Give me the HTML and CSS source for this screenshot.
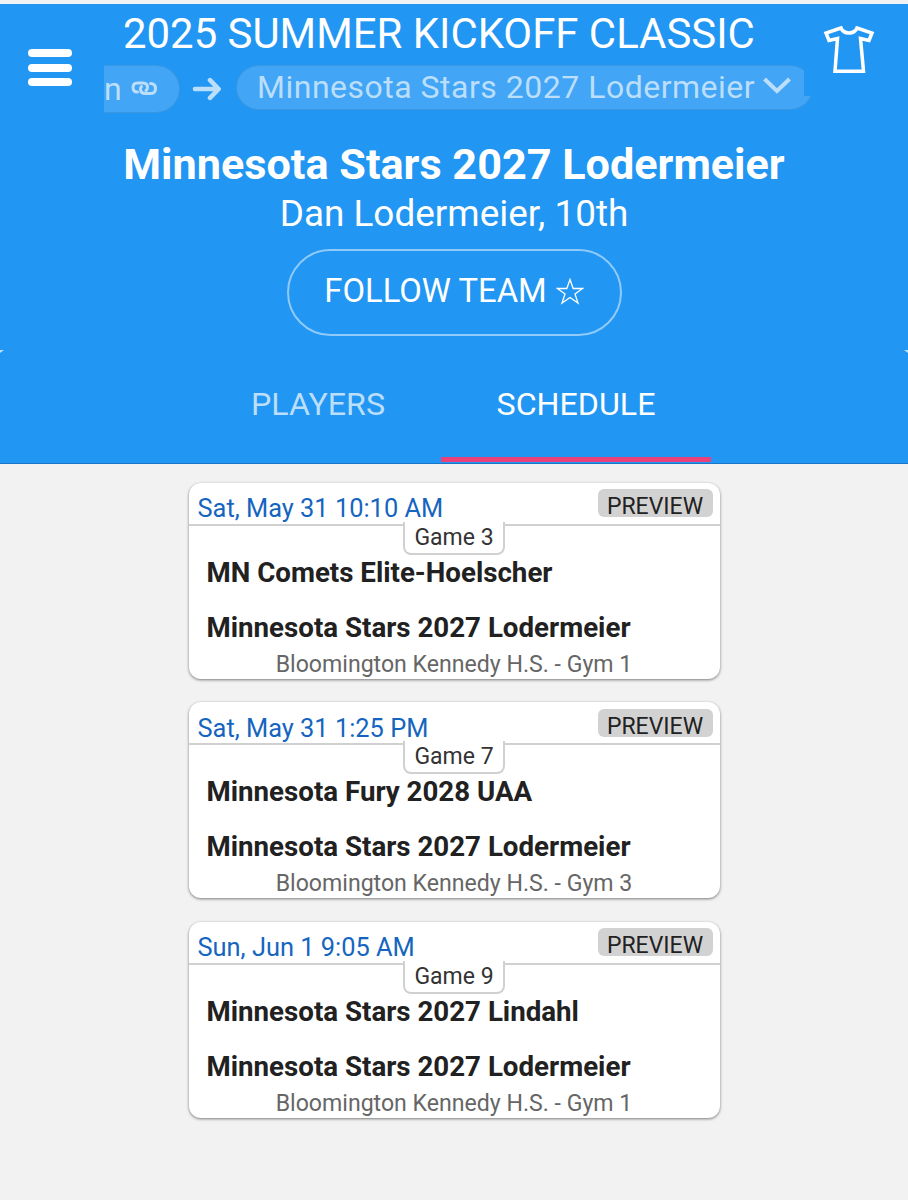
FILE: index.html
```
<!DOCTYPE html>
<html lang="en">
<head>
  <meta charset="UTF-8">
  <meta name="viewport" content="width=device-width, initial-scale=1.0">
  <title>Minnesota Stars 2027 Lodermeier</title>
  <link rel="stylesheet" href="styles.css">
</head>
<body>
  <header class="header">
    <div class="topbar">
      <button class="icon-btn menu-btn" aria-label="Menu">
        <span class="bar"></span>
        <span class="bar"></span>
        <span class="bar"></span>
      </button>
      <div class="topbar-main">
        <div class="event-title"><span>2025 SUMMER KICKOFF CLASSIC</span></div>
        <nav class="crumbs">
          <a class="crumb crumb-prev"><span>n</span>
            <svg class="link-icon" width="27" height="15" viewBox="0 0 27 15" fill="none" stroke="currentColor" stroke-width="3" stroke-linecap="round" stroke-linejoin="round">
              <path d="M6.500 11C3.500 11 2 9.500 2 6.500C2 3.500 3.500 2 6.500 2H12C15 2 16.500 3.500 16.500 6.500C16.500 8 16 8.800 15 9.500"/>
              <path d="M19.500 2.500C23 2.500 24.500 4.500 24.500 7.500C24.500 11 23 12.500 20 12.500H14.500C11 12.500 9.500 11 9.500 8C9.500 6.800 9.800 6 10.500 5.500"/>
            </svg>
          </a>
          <svg class="arrow-icon" width="30" height="24" viewBox="0 0 30 24" fill="none" stroke="currentColor" stroke-width="4.600" stroke-linecap="round" stroke-linejoin="round">
            <path d="M3 12H26M18 3.200L26.700 12L18 20.800"/>
          </svg>
          <a class="crumb crumb-current"><span>Minnesota Stars 2027 Lodermeier</span>
            <svg class="chevron-icon" width="28" height="18" viewBox="0 0 28 18" fill="none" stroke="currentColor" stroke-width="4">
              <path d="M1.500 2L14 14L26.500 2"/>
            </svg>
          </a>
        </nav>
      </div>
      <button class="icon-btn shirt-btn" aria-label="Team">
        <svg width="52" height="50" viewBox="0 0 52 50" fill="none" stroke="currentColor" stroke-width="3.500">
          <path d="M18 4L3 9L6 16.500L14.500 14.500L12 47.200H40.500L37.500 14.500L46 16.500L49 9L34 4C31.500 10.500 20.500 10.500 18 4Z"/>
        </svg>
      </button>
    </div>
    <h1 class="team-name"><span>Minnesota Stars 2027 Lodermeier</span></h1>
    <div class="team-coach"><span>Dan Lodermeier, 10th</span></div>
    <button class="follow-btn"><span>FOLLOW TEAM</span>
      <svg width="28" height="27" viewBox="0 0 28 27" fill="none" stroke="currentColor" stroke-width="1.300">
        <path d="M14 1.500L17.200 10.500H26.500L19 16L22 25L14 19.500L6 25L9 16L1.500 10.500H10.800Z"/>
      </svg>
    </button>
    <nav class="tabs">
      <a class="tab"><span>PLAYERS</span></a>
      <a class="tab active"><span>SCHEDULE</span></a>
    </nav>
  </header>

  <main class="games">
    <div class="game">
      <div class="game-head">
        <span class="game-date">Sat, May 31 10:10 AM</span>
        <span class="preview">PREVIEW</span>
      </div>
      <div class="game-number">Game 3</div>
      <div class="game-team"><span>MN Comets Elite-Hoelscher</span></div>
      <div class="game-team"><span>Minnesota Stars 2027 Lodermeier</span></div>
      <div class="game-venue"><span>Bloomington Kennedy H.S. - Gym 1</span></div>
    </div>
    <div class="game">
      <div class="game-head">
        <span class="game-date">Sat, May 31 1:25 PM</span>
        <span class="preview">PREVIEW</span>
      </div>
      <div class="game-number">Game 7</div>
      <div class="game-team"><span>Minnesota Fury 2028 UAA</span></div>
      <div class="game-team"><span>Minnesota Stars 2027 Lodermeier</span></div>
      <div class="game-venue"><span>Bloomington Kennedy H.S. - Gym 3</span></div>
    </div>
    <div class="game">
      <div class="game-head">
        <span class="game-date">Sun, Jun 1 9:05 AM</span>
        <span class="preview">PREVIEW</span>
      </div>
      <div class="game-number">Game 9</div>
      <div class="game-team"><span>Minnesota Stars 2027 Lindahl</span></div>
      <div class="game-team"><span>Minnesota Stars 2027 Lodermeier</span></div>
      <div class="game-venue"><span>Bloomington Kennedy H.S. - Gym 1</span></div>
    </div>
  </main>
</body>
</html>
```
FILE: styles.css
```
* {
  margin: 0;
  padding: 0;
  box-sizing: border-box;
}
body {
  background: #f2f2f2;
  color: #212121;
  font-family: Roboto, "Liberation Sans", sans-serif;
  min-height: 100vh;
  border-top: 4px solid #f2f2f2;
  white-space: nowrap;
}
button {
  font: inherit;
  color: inherit;
  background: none;
  border: none;
}
svg {
  display: block;
  flex: none;
}
.header {
  background: #2196f3;
  color: #fff;
  height: 459.500px;
  border-bottom: 1px solid #1976c8;
  display: flex;
  flex-direction: column;
  align-items: center;
}
.topbar {
  width: 100%;
  height: 136px;
  display: grid;
  grid-template-columns: 104px 700px 104px;
}
.icon-btn {
  display: flex;
}
.menu-btn {
  flex-direction: column;
  gap: 6.500px;
  padding: 45px 0 0 28px;
}
.bar {
  width: 44px;
  height: 8px;
  border-radius: 4px;
  background: #fff;
}
.shirt-btn {
  padding: 20px 0 0 19px;
}
.event-title {
  height: 61px;
  padding-left: 19px;
  font-size: 41.900px;
  line-height: 59px;
}
.crumbs {
  width: 709px;
  height: 50px;
  display: flex;
  align-items: flex-start;
  color: #bbdefb;
  font-size: 32px;
  /* the current crumb runs a little past the scroll area */
  clip-path: polygon(0 0, 700px 0, 700px 31px, 709px 31px, 709px 50px, 0 50px);
}
.crumb {
  display: flex;
  background: #42a5f5;
  box-shadow: 0 0 0 1px #3a98e2;
  letter-spacing: 0.500px;
}
.crumb-prev {
  width: 75px;
  height: 46px;
  margin-top: 1px;
  border-radius: 0 23px 23px 0;
  line-height: 47px;
}
.link-icon {
  margin: 15px 0 0 9px;
}
.arrow-icon {
  margin: 12px 15px 0 13px;
}
.crumb-current {
  width: 575px;
  height: 43px;
  margin-top: 1px;
  padding-left: 20px;
  border-radius: 22px;
  line-height: 42px;
}
.chevron-icon {
  margin: 11px 0 0 8px;
}
.team-name {
  height: 49px;
  font-size: 43.200px;
  line-height: 49px;
}
.team-coach {
  height: 60px;
  font-size: 36.900px;
  line-height: 49px;
}
.follow-btn {
  width: 335px;
  height: 87px;
  padding-bottom: 3px;
  border: 2px solid #90caf9;
  border-radius: 44px;
  display: flex;
  justify-content: center;
  align-items: center;
  gap: 9px;
  font-size: 32.800px;
}
.tabs {
  position: relative;
  flex: 1;
  width: 100%;
  padding: 15px 0 0 195px;
  display: flex;
}
/* rounded corners of the tab bar */
.tabs::before,
.tabs::after {
  content: '';
  position: absolute;
  top: 14px;
  width: 4px;
  height: 3px;
  background: #bbdefb;
}
.tabs::before {
  left: 0;
  clip-path: polygon(0 0, 100% 0, 0 100%);
}
.tabs::after {
  right: 0;
  clip-path: polygon(0 0, 100% 0, 100% 100%);
}
.tab {
  height: 111px;
  color: #bbdefb;
  font-size: 32.200px;
  line-height: 107px;
  text-align: center;
}
.tab:first-child {
  width: 246px;
}
.tab.active {
  width: 270px;
  color: #fff;
  border-bottom: 5px solid #ec407a;
}
.games {
  display: flex;
  flex-direction: column;
  align-items: center;
  gap: 23.500px;
  padding-top: 19px;
}
.game {
  width: 531px;
  height: 196px;
  background: #fff;
  border-radius: 12px;
  box-shadow: 0 1px 3px rgba(0, 0, 0, 0.5);
  display: flex;
  flex-direction: column;
}
.game > div {
  flex: none;
}
.game-head {
  height: 43px;
  padding: 6.500px 7px 0 9px;
  border-bottom: 2px solid #d0d0d0;
  display: flex;
  justify-content: space-between;
  align-items: flex-start;
}
.game-date {
  color: #1565c0;
  font-size: 25.400px;
  line-height: 39px;
}
.preview {
  width: 115px;
  height: 28px;
  border-radius: 6px;
  background: #d2d2d2;
  font-size: 23px;
  line-height: 35px;
  text-align: center;
}
.game-number {
  align-self: center;
  width: 102px;
  height: 33px;
  margin-top: -4px;
  border: 2px solid #d0d0d0;
  border-top: none;
  border-radius: 0 0 8px 8px;
  background: #fff;
  color: #333;
  font-size: 23px;
  line-height: 31px;
  text-align: center;
}
.game-team {
  height: 55px;
  padding-left: 18px;
  font-size: 27.700px;
  font-weight: 700;
  line-height: 36px;
}
.game-venue {
  margin-top: -19px;
  color: #666;
  font-size: 23.100px;
  line-height: 38px;
  text-align: center;
}
```
